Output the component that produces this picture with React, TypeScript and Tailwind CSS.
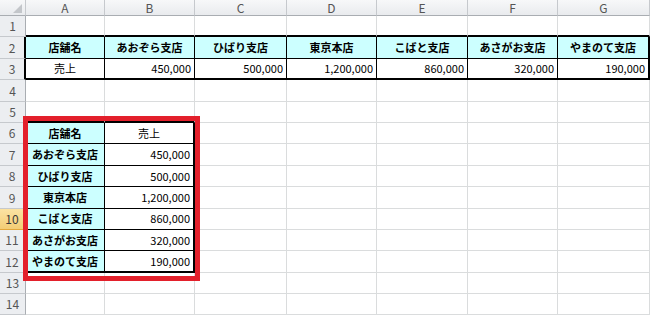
import React from "react";

// column widths: row header, then A..G
const COL_LETTERS = ["A", "B", "C", "D", "E", "F", "G"];
const ROW_COUNT = 14;
const SELECTED_ROW = 10;

type Cell = { text: string; head?: boolean; align?: "center" | "right" };

const BRANCHES = [
  "あおぞら支店",
  "ひばり支店",
  "東京本店",
  "こばと支店",
  "あさがお支店",
  "やまのて支店",
];
const SALES = ["450,000", "500,000", "1,200,000", "860,000", "320,000", "190,000"];

// sheet contents keyed by "row:col" (col 1 = A)
const CELLS: Record<string, Cell> = {};
CELLS["2:1"] = { text: "店舗名", head: true };
CELLS["3:1"] = { text: "売上", align: "center" };
BRANCHES.forEach((name, i) => {
  CELLS[`2:${i + 2}`] = { text: name, head: true };
  CELLS[`3:${i + 2}`] = { text: SALES[i], align: "right" };
});
CELLS["6:1"] = { text: "店舗名", head: true };
CELLS["6:2"] = { text: "売上", align: "center" };
BRANCHES.forEach((name, i) => {
  CELLS[`${i + 7}:1`] = { text: name, head: true };
  CELLS[`${i + 7}:2`] = { text: SALES[i], align: "right" };
});

// bordered ranges
const TABLES = [
  { id: 1, r1: 2, r2: 3, c1: 1, c2: 7 },
  { id: 2, r1: 6, r2: 12, c1: 1, c2: 2 },
];

function tableAt(r: number, c: number) {
  const t = TABLES.find((t) => r >= t.r1 && r <= t.r2 && c >= t.c1 && c <= t.c2);
  return t ? t.id : 0;
}

function rightBorder(r: number, c: number) {
  const a = tableAt(r, c);
  const b = tableAt(r, c + 1);
  if (a && a === b) return "border-r border-r-black";
  if (a || b) return "border-r-2 border-r-black";
  return "border-r border-r-[#dadcdd]";
}

function bottomBorder(r: number, c: number) {
  const a = tableAt(r, c);
  const b = tableAt(r + 1, c);
  if (a && a === b) return "border-b border-b-black";
  if (a || b) return "border-b-2 border-b-black";
  return "border-b border-b-[#dadcdd]";
}

function ColumnHeader({ letter }: { letter: string }) {
  return (
    <div className="flex items-center justify-center border-r border-b border-r-[#c6c9cd] border-b-[#a9adb2] bg-gradient-to-b from-[#f7f8f9] to-[#e9ebee] text-[12px] text-[#555]">
      {letter}
    </div>
  );
}

function RowHeader({ row }: { row: number }) {
  const selected = row === SELECTED_ROW;
  const edge = tableAt(row, 1) ? "border-r-2 border-r-black" : "border-r border-r-[#a9adb2]";
  return (
    <div
      className={
        "flex items-end justify-center pb-[1px] border-b text-[12px] " +
        edge +
        (selected
          ? " bg-gradient-to-b from-[#fbe3a3] to-[#f3cd75] border-b-[#e2a73c] text-[#3a3a3a]"
          : " bg-[#eceef1] border-b-[#c6c9cd] text-[#555]")
      }
    >
      {row}
    </div>
  );
}

function SheetCell({ row, col }: { row: number; col: number }) {
  const cell = CELLS[`${row}:${col}`];
  const base = `flex items-center ${rightBorder(row, col)} ${bottomBorder(row, col)}`;
  if (!cell) return <div className={base + " bg-white"} />;
  if (cell.head) {
    return (
      <div className={base + " justify-center bg-[#ccffff] font-bold text-black"}>
        {cell.text}
      </div>
    );
  }
  return (
    <div
      className={
        base +
        " bg-white text-black " +
        (cell.align === "right" ? "justify-end pr-[3px]" : "justify-center")
      }
    >
      {cell.text}
    </div>
  );
}

export default function App() {
  const rows = Array.from({ length: ROW_COUNT }, (_, i) => i + 1);
  return (
    <div className="relative h-[316px] w-[650px] overflow-hidden bg-white font-['Noto_Sans_CJK_JP',sans-serif] text-[11px]">
      <div className="grid grid-cols-[26px_79px_90px_92px_90px_91px_90px_92px] grid-rows-[16px_repeat(14,21.4px)]">
        {/* corner */}
        <div className="relative border-r border-b border-r-[#c6c9cd] border-b-[#a9adb2] bg-gradient-to-b from-[#f7f8f9] to-[#e9ebee]">
          <svg className="absolute right-[3px] bottom-[2px]" width="9" height="9" viewBox="0 0 9 9">
            <polygon points="9,0 9,9 0,9" fill="#c3c6ca" />
          </svg>
        </div>
        {COL_LETTERS.map((l) => (
          <ColumnHeader key={l} letter={l} />
        ))}

        {rows.map((r) => (
          <React.Fragment key={r}>
            <RowHeader row={r} />
            {COL_LETTERS.map((_, i) => (
              <SheetCell key={i} row={r} col={i + 1} />
            ))}
          </React.Fragment>
        ))}
      </div>

      {/* red highlight around the vertical table */}
      <div className="pointer-events-none absolute left-[23px] top-[116px] h-[165px] w-[177px] border-[5px] border-[#e3202b]" />
    </div>
  );
}
